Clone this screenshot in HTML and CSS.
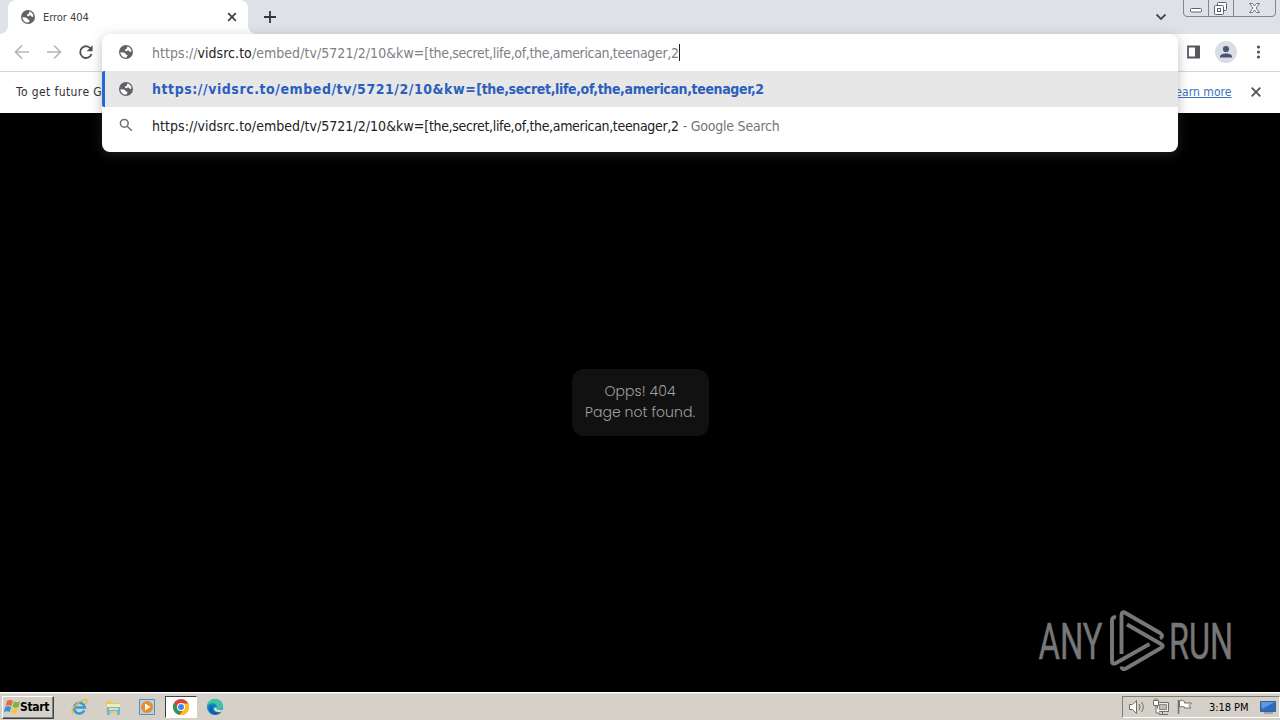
FILE: index.html
```html
<!DOCTYPE html>
<html lang="en">
<head>
<meta charset="utf-8">
<title>Error 404</title>
<link rel="stylesheet" href="styles.css">
</head>
<body>
<svg class="defs" width="0" height="0">
  <symbol id="globe" viewBox="0 0 14 14">
    <circle cx="7" cy="7" r="7" fill="#5f6368"/>
    <path fill="#fff" d="M8.300 1.600C10.700 2.100 12.300 4 12.500 6.400L11 7 9.800 5.600H8.200L7.200 6.500 6 5.600l.2-1.300 1.700-.5zM1.400 7.300l3.400.1 1.700 1 .6 1.300 1.700.4-.8 1.200-.2 1.200C4.400 13 1.600 10.800 1.400 7.300z"/>
  </symbol>
</svg>
<div class="screen">
  <header class="tabstrip">
    <div class="tab">
      <svg class="globe" width="14" height="14"><use href="#globe"/></svg>
      <span class="tab-title">Error 404</span>
      <svg class="tab-close" width="10" height="10" viewBox="0 0 10 10"><path d="M1.2 1.2l7.6 7.6M8.8 1.2L1.2 8.8" stroke="#3c4043" stroke-width="1.7"/></svg>
    </div>
    <svg class="new-tab" width="12" height="12" viewBox="0 0 12 12"><path d="M6 0v12M0 6h12" stroke="#33363a" stroke-width="1.8"/></svg>
    <svg class="chevron" width="12" height="8" viewBox="0 0 12 8"><path d="M1.5 1.5L6 6l4.500-4.500" fill="none" stroke="#45494e" stroke-width="1.8"/></svg>
    <svg class="winctl" width="94" height="18" viewBox="0 0 94 18" fill="none" stroke="#81868f">
      <path d="M.5 0v13q0 3.500 3.500 3.500h85q3.500 0 3.500-3.500V0M25.500 0v16M50.500 0v16"/>
      <rect x="7.500" y="8.500" width="11" height="3.500" rx="1" fill="#fff" stroke="#5d626c"/>
      <rect x="34.500" y="2.500" width="9" height="8" rx="1" fill="#fff" stroke="#5d626c"/>
      <rect x="31.500" y="5.500" width="9" height="9" rx="1" fill="#fff" stroke="#5d626c"/>
      <rect x="34.500" y="8.500" width="3" height="3" stroke="#5d626c"/>
      <path d="M66.500 3.500h3l2 2.500 2-2.500h3l-3.500 4.500 3.500 4.500h-3l-2-2.500-2 2.500h-3l3.500-4.500z" fill="#fff" stroke="#6c717a"/>
    </svg>
  </header>
  <div class="toolbar">
    <svg class="nav" width="100" height="36" viewBox="0 0 100 36" fill="none">
      <path d="M29 18H16M22 11.500L15.500 18l6.500 6.500M47 18h13M54 11.500l6.500 6.500-6.500 6.500" stroke="#b4b6b9" stroke-width="1.6"/>
      <path d="M91.200 15.500A5.800 5.800 0 1 0 91.500 20" stroke="#505357" stroke-width="1.9"/>
      <path d="M92.600 11.300v6h-6z" fill="#505357"/>
    </svg>
    <svg class="tools" width="94" height="36" viewBox="0 0 94 36">
      <path d="M2 12.500h11v11H2z" fill="none" stroke="#55585c" stroke-width="1.8"/><path d="M9 12h5v12H9z" fill="#55585c"/>
      <circle cx="40" cy="18" r="11" fill="#dadde3"/>
      <circle cx="40" cy="15" r="3.100" fill="#4b5570"/><path d="M34 23.500v-1c0-4 12-4 12 0v1z" fill="#4b5570"/>
      <g fill="#505357"><circle cx="72.500" cy="13" r="1.600"/><circle cx="72.500" cy="18" r="1.600"/><circle cx="72.500" cy="23" r="1.600"/></g>
    </svg>
  </div>
  <div class="infobar">
    <span class="info-text">To get future G</span>
    <span class="learn">earn more</span>
    <svg class="info-close" width="10" height="10" viewBox="0 0 10 10"><path d="M.7.700l8.600 8.600M9.300.700L.7 9.300" stroke="#505357" stroke-width="1.800"/></svg>
  </div>
  <main class="page">
    <div class="error">Opps! 404<br>Page not found.</div>
    <svg class="watermark" width="230" height="90" viewBox="0 0 230 90">
      <text x="8.500" y="59" textLength="64" lengthAdjust="spacingAndGlyphs">ANY</text>
      <text x="139" y="59" textLength="64" lengthAdjust="spacingAndGlyphs">RUN</text>
      <path d="M86 17.500q-4-1-4 3V61q0 4 4 2l33.500-19M91.500 54V15.500q0-5 4-2.500L130 33q4 3 0 5.500M97 24.500L131 44q3.500 2 0 4L96 68.500q-4 2-4.500-2" fill="none" stroke="#777" stroke-width="3.900"/>
    </svg>
  </main>
  <footer class="taskbar">
    <div class="start">
      <svg width="17" height="16" viewBox="0 0 17 16"><path d="M3 2q3-2 6 0L7.500 7q-3-1.500-6 0z" fill="#e66c3c"/><path d="M10 2.500q3 1.500 6 0L14.500 8q-3 1.500-6 0z" fill="#79b641"/><path d="M1.200 8q3-1.500 6 0l-1.400 5q-3-1.500-6 0z" fill="#3c8fd4"/><path d="M8.200 9q3 1.500 6 0l-1.500 5q-3 1.500-6 0z" fill="#f4c63d"/></svg>
      <span>Start</span>
    </div>
    <div class="launch"><svg width="18" height="18" viewBox="0 0 18 18" fill="none"><path d="M14.300 12.500A5.400 5.400 0 1 1 14.800 9.500H5" stroke="#319bdb" stroke-width="2.600"/><path d="M3 16C-1 13 8 3 15 1.500c3-.3 2 2.500.5 4.500" stroke="#e5b83d" stroke-width="1.400"/></svg></div>
    <div class="launch"><svg width="18" height="18" viewBox="0 0 18 18"><path d="M2 3h5l1 2h8v10H2z" fill="#e9c85c"/><path d="M3 6h13v3H3z" fill="#f9ebac"/><path d="M3 9h13v8h-3v-4H6v4H3z" fill="#76b7d6"/><path d="M5 10h9v2H5z" fill="#c1e3ee"/></svg></div>
    <div class="launch"><svg width="18" height="18" viewBox="0 0 18 18"><path d="M1.500 1.500h15v15h-15z" fill="#b5d3ea" stroke="#568ebc"/><circle cx="9" cy="9" r="6" fill="#f18a22"/><path d="M7 5.500L12.500 9 7 12.500z" fill="#fff"/></svg></div>
    <div class="launch active"><svg width="16" height="16" viewBox="0 0 16 16"><circle cx="8" cy="8" r="8" fill="#db4437"/><path d="M1.100 4L5 10l3 2-2 3.700A8 8 0 0 1 1.100 4z" fill="#239b56"/><path d="M8 4.500h7.200A8 8 0 0 1 6.500 15.900L11 10z" fill="#fbc116"/><circle cx="8" cy="8" r="4" fill="#fff"/><circle cx="8" cy="8" r="3" fill="#4285f4"/></svg></div>
    <div class="launch"><svg width="16" height="16" viewBox="0 0 16 16"><circle cx="8" cy="8" r="8" fill="#1683c5"/><path d="M.2 7C1-1.500 13-2.500 15.700 6c.6 3-1.700 4.500-4.500 4.500-2 0-2-1-1.200-2C10 3 3 3 .2 7z" fill="#3dc6a2"/><path d="M6 6c-2 3 0 8 7.500 7.500-2 2.500-7 3.200-10 0C1 11 2 7 6 6z" fill="#1260ad"/><path d="M9.500 8c-1 1.500.5 3 3 2.800h3.300l-1.500 2C10 14 6.500 12 7 9z" fill="#ddd8ce"/></svg></div>
    <div class="tray">
      <svg width="76" height="20" viewBox="0 0 76 20" fill="none" stroke="#6f6e6b">
        <path d="M6.500 7.500h3l4-4v13l-4-4h-3z" fill="#fff"/><path d="M16 7q2 3 0 6M18.500 5q3.500 5 0 10"/>
        <path d="M34.500 5.500h11v9h-11zM36 17.500h9M39.500 15v2" fill="#ededeb"/><path d="M36.500 7.500h7v5h-7z" fill="#bdbdb8" stroke="#8c8b87"/><path d="M30.500 3.500h5v5h-5zM32 1.500v2M34 1.500v2M33 9v7h4" fill="#fff"/>
        <path d="M55.500 3v14" stroke-width="1.500"/><path d="M56.500 3.500q3-1 5 1v1.500h7l-2.500 2.500 2 2.500h-6.500V10q-2-1-5 0z" fill="#fff"/>
      </svg>
      <span class="clock">3:18 PM</span>
      <svg class="desktop" width="16" height="14" viewBox="0 0 16 14"><path d="M.500 1.500h15v10H.500z" fill="#2c6bc0" stroke="#3b5f96"/><path d="M1 2h14L2 9z" fill="#5c9be0"/><path d="M4 13h9" stroke="#777"/></svg>
    </div>
  </footer>
  <section class="popup">
    <div class="row">
      <svg class="globe" width="14" height="14"><use href="#globe"/></svg>
      <span class="url typed">https://<b>vidsrc.to</b>/embed/tv/5721/2/10&amp;kw=<span class="query">[the,secret,life,of,the,american,teenager,2</span></span><i class="caret"></i>
    </div>
    <div class="row selected">
      <svg class="globe" width="14" height="14"><use href="#globe"/></svg>
      <span class="url match">https://vidsrc.to/embed/tv/5721/2/10&amp;kw=<span class="query">[the,secret,life,of,the,american,teenager,2</span></span>
    </div>
    <div class="row">
      <svg class="globe" width="14" height="14" viewBox="0 0 14 14" fill="none" stroke="#6d7074" stroke-width="1.500"><circle cx="5.300" cy="5.300" r="3.900"/><path d="M8.200 8.200l4.600 4.600"/></svg>
      <span class="url">https://vidsrc.to/embed/tv/5721/2/10&amp;kw=<span class="query">[the,secret,life,of,the,american,teenager,2</span></span><span class="suffix">- Google Search</span>
    </div>
  </section>
</div>
</body>
</html>
```
FILE: styles.css
```css
* { box-sizing: border-box; }
body { margin: 0; font-family: "DejaVu Sans Condensed", "DejaVu Sans", sans-serif; font-stretch: condensed; }
svg { display: block; flex: none; }
.defs { position: absolute; }
.screen { position: relative; width: 1280px; height: 720px; display: flex; flex-direction: column; overflow: hidden; background: #000; }
.tabstrip { height: 34px; flex: none; display: flex; background: #dee1e6; padding-left: 8px; }
.tab { position: relative; width: 240px; height: 34px; display: flex; align-items: center; padding: 0 11px 0 13px; background: #fff; border-radius: 8px 8px 0 0; }
.tab::before, .tab::after { content: ""; position: absolute; bottom: 0; width: 8px; height: 8px; }
.tab::before { left: -8px; background: radial-gradient(circle at 0 0, transparent 7.5px, #fff 8px); }
.tab::after { right: -8px; background: radial-gradient(circle at 100% 0, transparent 7.5px, #fff 8px); }
.tab-title { margin-left: 8px; font-size: 11px; letter-spacing: -.05px; color: #3c4043; white-space: nowrap; }
.tab-close { margin-left: auto; }
.new-tab { margin: 11px 0 0 16px; }
.chevron { margin: 13px 0 0 auto; }
.winctl { margin: 0 3px 0 16px; }
.toolbar { height: 38px; flex: none; display: flex; justify-content: space-between; background: #fff; border-bottom: 1px solid #d5d7da; }
.infobar { height: 41px; flex: none; display: flex; align-items: center; padding: 0 19px 0 16px; background: #fff; font-size: 12px; white-space: nowrap; }
.info-text { color: #303134; letter-spacing: .4px; padding-bottom: 2px; }
.learn { margin-left: auto; color: #3a72bd; text-decoration: underline; letter-spacing: .05px; padding-bottom: 2px; }
.info-close { margin: 0 0 2px 19.5px; }
.page { position: relative; flex: 1; background: #000; display: flex; justify-content: center; align-items: center; }
.error { width: 137px; height: 67px; padding-top: 12px; border-radius: 12px; background: #111; color: #a0a0a0; font: 300 14px/21px "Poppins", Lato, sans-serif; text-align: center; letter-spacing: .05px; }
.watermark { position: absolute; left: 1030px; top: 487px; }
.watermark text { font: 400 50px Roboto, sans-serif; fill: #777; stroke: #777; stroke-width: .5px; }
.taskbar { height: 28px; flex: none; display: flex; align-items: center; background: #d5d1c8; border-top: 1px solid #fff; box-shadow: inset 0 1px #e6e3dd; padding: 1px 0 0 2px; }
.start { width: 52px; height: 23px; display: flex; align-items: center; padding-left: 1px; background: #d5d1c8; border: 1px solid; border-color: #fff #404040 #404040 #fff; box-shadow: inset -1px -1px #85827c; font-size: 12px; font-weight: bold; letter-spacing: -.35px; color: #000; margin-right: 9px; }
.start span { margin-left: -1px; }
.launch { width: 32px; height: 22px; margin-right: 2px; display: flex; align-items: center; justify-content: center; }
.active { background: #fff; border: 1px solid; border-color: #404040 #fff #fff #404040; }
.tray { width: 158px; height: 22px; margin-left: auto; display: flex; align-items: center; border: 1px solid; border-color: #817e78 #fff #fff #817e78; padding-right: 3px; }
.clock { margin-left: 10px; font-size: 11px; letter-spacing: -.05px; color: #000; white-space: nowrap; }
.desktop { margin-left: auto; }
.popup { position: absolute; left: 102px; top: 34px; width: 1076px; height: 118px; background: #fff; border-radius: 8px; box-shadow: 0 3px 12px rgba(85,85,85,.38); overflow: hidden; }
.row { height: 36.5px; display: flex; align-items: center; padding-left: 17px; font-size: 14px; color: #202124; white-space: nowrap; }
.selected { background: #e7e7e8; border-left: 3px solid #2468d8; border-radius: 2px 0 0 2px; padding-left: 14px; }
.url { margin-left: 19px; padding-top: 1px; letter-spacing: .045px; }
.query { letter-spacing: -.33px; }
.typed { color: #7d8084; }
.typed b { font-weight: normal; color: #202124; }
.match { color: #2b5fbc; font-weight: bold; letter-spacing: .55px; padding-top: 0; }
.match .query { letter-spacing: -.37px; }
.caret { width: 1px; height: 17px; background: #222; }
.suffix { margin-left: 4px; padding-top: 1px; color: #73767a; letter-spacing: -.22px; }
```
